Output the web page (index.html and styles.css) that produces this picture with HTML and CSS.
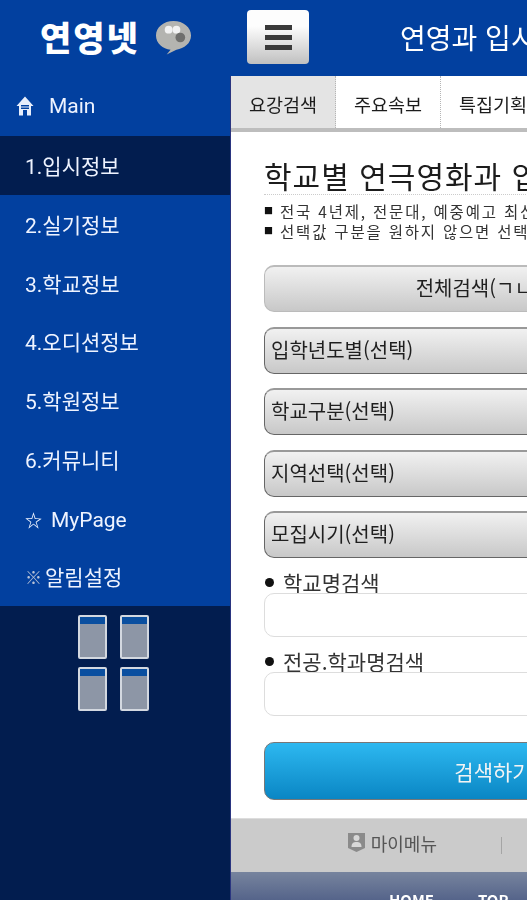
FILE: index.html
```html
<!DOCTYPE html>
<html lang="ko">
<head>
  <meta charset="UTF-8" />
  <meta name="viewport" content="width=device-width, initial-scale=1.0"/>
  <title>연영넷</title>
  <link rel="stylesheet" href="styles.css">
</head>
<body>
  <div class="app">
    <!-- Side menu -->
    <nav class="side">
      <div class="logo">
        <span class="logo-text">연영넷</span>
        <svg class="bubble" width="37" height="37" viewBox="0 0 38 36">
          <path d="M19 1C9 1 1 7.500 1 16c0 8 7 14 15 14.500L12 35.500 22 30.500C30 29.500 37 24 37 16 37 7.500 29 1 19 1z" fill="#b4b4b0"/>
          <circle cx="14" cy="10" r="4" fill="#f2f2f2"/>
          <circle cx="22" cy="10" r="4" fill="#f2f2f2"/>
          <circle cx="26" cy="18" r="5" fill="#6f6f6d"/>
        </svg>
      </div>
      <a class="side-item side-main">
        <svg class="home" width="18" height="20" viewBox="0 0 18 20">
          <path d="M9 0.500 0.500 10 3 10 3 19.500 7 19.500 7 14 11 14 11 19.500 15 19.500 15 10 17.500 10z" fill="#e8eefb"/>
          <path d="M5 9h8v1.500H5zM5 11.500h8V13H5z" fill="#02409f"/>
        </svg>
        Main
      </a>
      <a class="side-item side-on">1.입시정보</a>
      <a class="side-item">2.실기정보</a>
      <a class="side-item">3.학교정보</a>
      <a class="side-item">4.오디션정보</a>
      <a class="side-item">5.학원정보</a>
      <a class="side-item">6.커뮤니티</a>
      <a class="side-item side-my"><span class="star">☆</span>MyPage</a>
      <a class="side-item side-alarm"><span class="gear">※</span>알림설정</a>
      <div class="tiles">
        <div class="tile"></div>
        <div class="tile"></div>
        <div class="tile"></div>
        <div class="tile"></div>
      </div>
    </nav>

    <!-- Main panel -->
    <div class="main">
      <header class="top">
        <button class="menu-btn"><span></span><span></span><span></span></button>
        <h1 class="top-title">연영과 입시</h1>
      </header>
      <div class="tabs">
        <div class="tab tab-on">요강검색</div>
        <div class="tab">주요속보</div>
        <div class="tab">특집기획</div>
      </div>
      <section class="content">
        <h2 class="heading">학교별 연극영화과 입</h2>
        <p class="note"><span class="square">■</span>전국 4년제, 전문대, 예중예고 최신</p>
        <p class="note"><span class="square">■</span>선택값 구분을 원하지 않으면 선택</p>
        <div class="pick pick-center">전체검색(ㄱㄴㄷ순)</div>
        <div class="pick">입학년도별(선택)</div>
        <div class="pick">학교구분(선택)</div>
        <div class="pick">지역선택(선택)</div>
        <div class="pick">모집시기(선택)</div>
        <label class="field-label"><span class="dot"></span>학교명검색</label>
        <input class="field" type="text">
        <label class="field-label"><span class="dot"></span>전공.학과명검색</label>
        <input class="field" type="text">
        <div class="go">검색하기</div>
      </section>
      <div class="foot-menu">
        <div class="foot-cell">
          <svg class="me" width="17" height="19" viewBox="0 0 17 19">
            <path d="M0 0h17v15l-8.500 4L0 15z" fill="#8b8b8b"/>
            <circle cx="8.500" cy="5" r="3" fill="#d8d8d8"/>
            <path d="M3.500 14c0-4 2-5 5-5s5 1 5 5z" fill="#d8d8d8"/>
          </svg>
          마이메뉴
        </div>
      </div>
      <div class="foot-bar"><span>HOME</span><span>TOP</span></div>
    </div>
  </div>
</body>
</html>
```

FILE: styles.css
```css
html, body {
  margin: 0;
  height: 100%;
  overflow: hidden;
  background: #021d4f;
}

body {
  font-family: "Noto Sans CJK KR", "Noto Sans", sans-serif;
}

.app {
  display: flex;
  width: 755px;
  height: 900px;
  filter: blur(0.5px);
}

/* side menu */
.side {
  flex: none;
  width: 230px;
  background: #021d4f;
}

.logo {
  display: flex;
  align-items: center;
  gap: 15px;
  height: 76px;
  padding: 0 0 2px 40px;
  background: #02409f;
  box-sizing: border-box;
}

.logo-text {
  font-size: 34px;
  font-weight: 900;
  line-height: 1;
  letter-spacing: 2px;
  color: #fff;
}

.side-item {
  display: flex;
  align-items: center;
  height: 58.700px;
  padding-left: 25px;
  background: #02409f;
  color: #eef3ff;
  font-family: Roboto, "Noto Sans CJK KR", sans-serif;
  font-size: 21px;
}

.side-main {
  height: 60px;
  padding-left: 16px;
  gap: 15px;
}

.side-on {
  background: #021d4f;
}

.side-my {
  gap: 9px;
  padding-top: 5px;
  box-sizing: border-box;
}

.star {
  font-size: 17px;
  font-weight: 700;
}

.side-alarm {
  gap: 3px;
}

.gear {
  font-size: 17px;
  font-weight: 700;
  color: #b9c2d6;
}

.tiles {
  display: grid;
  grid-template-columns: 29px 29px;
  gap: 8px 13px;
  justify-content: center;
  padding: 9px 3px 0 0;
}

.tile {
  height: 44px;
  box-sizing: border-box;
  border: 2px solid #d3d8e0;
  border-radius: 2px;
  background: linear-gradient(#0a4fa0 7px, #8d96a6 7px);
}

/* main panel */
.main {
  flex: none;
  width: 524px;
  display: flex;
  flex-direction: column;
  border-left: 1px solid #2a3580;
  background: #fff;
}

.top {
  flex: none;
  display: flex;
  align-items: center;
  height: 76px;
  padding-left: 17px;
  margin-left: -1px;
  background: #02409f;
}

.menu-btn {
  flex: none;
  display: flex;
  flex-direction: column;
  align-items: center;
  justify-content: center;
  gap: 5px;
  width: 62px;
  height: 54px;
  margin-bottom: 2px;
  padding: 0;
  border: 0;
  border-radius: 4px;
  background: linear-gradient(#fdfdfd 30%, #c0c0c0);
}

.menu-btn span {
  width: 27px;
  height: 5px;
  background: #3a3a3a;
}

.top-title {
  margin: 0 0 2px 91px;
  font-size: 28px;
  font-weight: 400;
  color: #fff;
  white-space: nowrap;
}

.tabs {
  flex: none;
  display: flex;
  height: 52px;
  border-bottom: 4px solid #bdbdbd;
}

.tab {
  width: 105px;
  padding-top: 4px;
  box-sizing: border-box;
  display: flex;
  align-items: center;
  justify-content: center;
  border-right: 1px dotted #b5b5b5;
  font-size: 18.500px;
  color: #1c1c1c;
}

.tab-on {
  background: #e4e4e4;
}

.content {
  flex: none;
  padding: 26px 33px 18px;
}

.heading {
  margin: 0 0 6px;
  padding-bottom: 2px;
  border-bottom: 1px dotted #ccc;
  font-size: 30px;
  font-weight: 400;
  line-height: 34px;
  letter-spacing: 1px;
  color: #1c1c1c;
  white-space: nowrap;
}

.note {
  display: flex;
  align-items: center;
  gap: 7px;
  height: 20px;
  margin: 0;
  font-size: 15.500px;
  line-height: 18px;
  letter-spacing: 1.800px;
  color: #333;
  white-space: nowrap;
}

.square {
  font-size: 9px;
  letter-spacing: 0;
  color: #111;
}

.pick {
  display: flex;
  align-items: center;
  height: 47px;
  margin-top: 14.500px;
  padding: 0 0 3px 6px;
  box-sizing: border-box;
  border: 1px solid #666;
  border-top: 2px solid #999;
  border-radius: 10px;
  background: linear-gradient(#f1f1f1, #c8c8c8);
  font-size: 20px;
  color: #1f1f1f;
}

.pick-center {
  justify-content: center;
  margin-top: 24px;
  border-color: #bbb;
}

.field-label {
  display: flex;
  align-items: center;
  gap: 9px;
  margin: 12px 0 -1px;
  padding-left: 1px;
  font-size: 21px;
  line-height: 24px;
  color: #333;
}

.dot {
  width: 9px;
  height: 9px;
  border-radius: 50%;
  background: #111;
}

.field {
  display: block;
  position: relative;
  width: 100%;
  height: 44px;
  box-sizing: border-box;
  border: 1px solid #ddd;
  border-radius: 10px;
  background: #fff;
}

.go {
  display: flex;
  align-items: center;
  justify-content: center;
  height: 58px;
  margin-top: 26px;
  box-sizing: border-box;
  border: 1px solid #777;
  border-radius: 10px;
  background: linear-gradient(#2db8f0, #0a86c4);
  font-size: 21px;
  color: #f4f4f4;
}

.foot-menu {
  flex: none;
  display: flex;
  height: 54px;
  background: #cbcbcb;
  border-top: 1px solid #ddd;
  box-sizing: border-box;
}

.foot-cell {
  position: relative;
  display: flex;
  align-items: center;
  justify-content: flex-end;
  gap: 6px;
  width: 206px;
  padding: 0 65px 6px 0;
  font-size: 18px;
  color: #555;
}

.foot-cell::after {
  content: "";
  position: absolute;
  right: 0;
  top: 18px;
  height: 17px;
  border-right: 1px solid #a5a5a5;
}

.foot-bar {
  flex: none;
  display: flex;
  gap: 44px;
  height: 28px;
  padding: 19px 0 0 158px;
  box-sizing: border-box;
  background: linear-gradient(#77849e, #55648a);
  font-size: 15px;
  font-weight: 700;
  line-height: 18px;
  color: #fff;
}
```
